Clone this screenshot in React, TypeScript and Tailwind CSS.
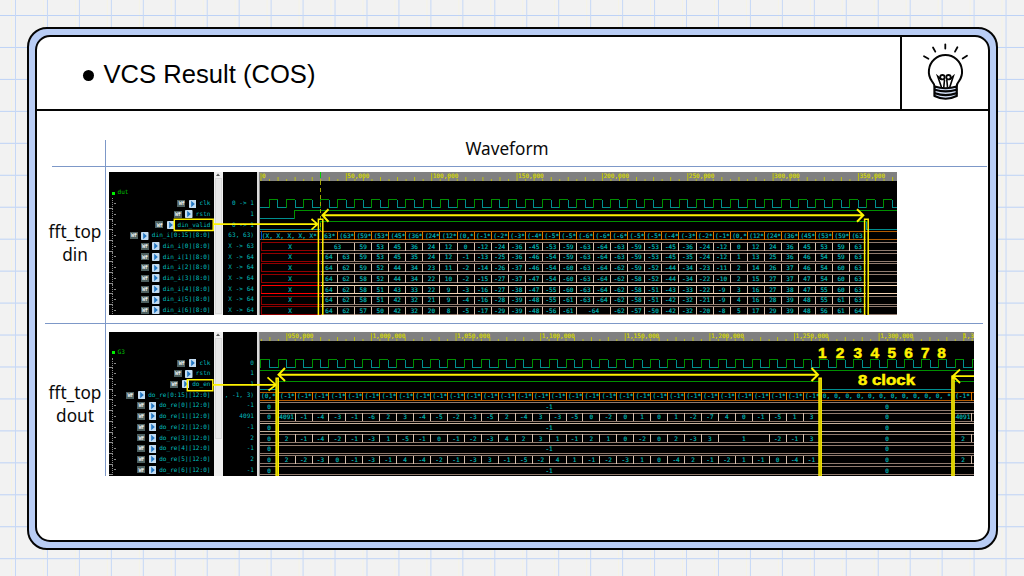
import React from 'react';

const MONO = '"DejaVu Sans Mono", monospace';
const ROW = 10.7;
const TEAL = '#00bcbc';
const GREEN = '#009000';
const CYAN = '#008f8f';

type Cell = [label: string, span: number];

const one = (s: string): Cell[] =>
  s.split(' ').map((t) => {
    const [label, span] = t.split('x');
    return [label, span ? Number(span) : 1];
  });

const ORANGE = '#b35a00';
const DIM = '#8f7a6e';
const BRIGHT = '#f3d3b4';

const dinData: Cell[][] = [
  one('63x2 59 53 45 36 24 12 0 -12 -24 -36 -45 -53 -59 -63 -64 -63 -59 -53 -45 -36 -24 -12 0 12 24 36 45 53 59 63'),
  one('64 63 59 53 45 35 24 12 -1 -13 -25 -36 -46 -54 -59 -63 -64 -63 -59 -53 -45 -35 -24 -12 1 13 25 36 46 54 59 63'),
  one('64 62 59 52 44 34 23 11 -2 -14 -26 -37 -46 -54 -60 -63 -64 -62 -59 -52 -44 -34 -23 -11 2 14 26 37 46 54 60 63'),
  one('64 62 58 52 44 34 22 10 -2 -15 -27 -37 -47 -54 -60 -63 -64 -62 -58 -52 -44 -34 -22 -10 2 15 27 37 47 54 60 63'),
  one('64 62 58 51 43 33 22 9 -3 -16 -27 -38 -47 -55 -60 -63 -64 -62 -58 -51 -43 -33 -22 -9 3 16 27 38 47 55 60 63'),
  one('64 62 58 51 42 32 21 9 -4 -16 -28 -39 -48 -55 -61 -63 -64 -62 -58 -51 -42 -32 -21 -9 4 16 28 39 48 55 61 63'),
  one('64 62 57 50 42 32 20 8 -5 -17 -29 -39 -48 -56 -61 -64x2 -62 -57 -50 -42 -32 -20 -8 5 17 29 39 48 56 61 64'),
];
const dinBus = one(
  '63* (63* (59* (53* (45* (36* (24* (12* (0,* (-1* (-2* (-3* (-4* (-5* (-5* (-6* (-6* (-6* (-5* (-5* (-4* (-3* (-2* (-1* (0,* (12* (24* (36* (45* (53* (59* (63,',
);
const doutData: Cell[][] = [
  one('-1x32'),
  one('4091 -1 -4 -3 -1 -6 2 3 -4 -5 -2 -3 -5 2 -4 3 -3 -5 0 -2 0 1 0 1 -2 -7 4 0 -1 -5 1 3'),
  one('-1x32'),
  one('2 -1 -4 -2 -1 -3 1 -5 -1 0 -1 -2 -3 4 2 3 1 -1 2 1 0 -2 0 2 -3 3 1x3 -2 -1 3'),
  one('-1x32'),
  one('2 -2 -3 0 -1 -3 -1 4 -4 -2 -1 -3 3 -1 -5 -2 4 1 -1 -2 -3 1 0 -4 2 -1 -2 1 -1 0 -4 -1'),
  one('-1x32'),
];
const doutBus: Cell[] = Array.from({ length: 32 }, () => ['(-1*', 1] as Cell);

function Txt({ x, y, children, fill = TEAL, anchor = 'middle' }: { x: number; y: number; children: string; fill?: string; anchor?: 'start' | 'middle' }) {
  return (
    <text x={x} y={y + 2.2} fontSize="6.1" fontFamily={MONO} fill={fill} stroke={fill} strokeWidth="0.15" textAnchor={anchor} xmlSpace="preserve">
      {children}
    </text>
  );
}

function Line({ d, color, w = 1 }: { d: string; color: string; w?: number }) {
  return <path d={d} stroke={color} strokeWidth={w} fill="none" shapeRendering="crispEdges" />;
}

function Ruler({ x0, x1, y, origin, step, first, unit }: { x0: number; x1: number; y: number; origin: number; step: number; first: number; unit: number }) {
  const items: React.ReactNode[] = [];
  for (let k = -10; k < 100; k++) {
    const x = origin + (k * step) / 10;
    if (x < x0 || x > x1) continue;
    const major = k % 10 === 0;
    items.push(<path key={k} d={`M${x} ${y + (major ? 1 : k % 2 ? 7 : 5)}V${y + 9}`} stroke="#c4c800" strokeWidth="0.9" />);
    if (major) {
      const n = first + (k / 10) * unit;
      const room = Math.max(1, Math.floor((x1 - x + 0.8) / 3.67));
      items.push(
        <Txt key={`t${k}`} x={room < 6 ? x - 0.7 : x + 1} y={y + 4.2} fill="#d8dc00" anchor="start">
          {(n === 0 ? '0' : n.toLocaleString('en-US')).slice(0, room < 9 ? room : 9)}
        </Txt>,
      );
    }
  }
  return (
    <g>
      <rect x={x0} y={y} width={x1 - x0} height="9" fill="#808080" />
      {items}
    </g>
  );
}

function Clock({ x0, x1, rise, period, y, startHigh }: { x0: number; x1: number; rise: number; period: number; y: number; startHigh: boolean }) {
  const g: string[] = [];
  const c: string[] = [];
  const hi = y - 4;
  const lo = y + 4;
  if (startHigh) {
    const f = rise - period / 2;
    g.push(`M${x0 + 0.5} ${lo}V${hi}H${f}`);
    c.push(`M${f} ${hi}V${lo}H${rise}`);
  } else c.push(`M${x0} ${lo}H${rise}`);
  for (let x = rise; x < x1; x += period) {
    g.push(`M${x} ${lo}V${hi}H${x + period / 2}`);
    c.push(`M${x + period / 2} ${hi}V${lo}H${x + period}`);
  }
  return (
    <g>
      <Line d={c.join('')} color={CYAN} />
      <Line d={g.join('')} color={GREEN} />
    </g>
  );
}

function BusRow({ y, cells, start, period, tick, shift = 0 }: { y: number; cells: Cell[]; start: number; period: number; tick: string; shift?: number }) {
  let k = 0;
  const out: React.ReactNode[] = [];
  cells.forEach(([label, span], i) => {
    const a = start + k * period;
    const b = a + span * period;
    k += span;
    out.push(<Line key={`l${i}`} d={`M${b} ${y - 4}V${y + 4}`} color={tick} />);
    out.push(
      <Txt key={i} x={(a + b) / 2 + shift} y={y}>
        {label}
      </Txt>,
    );
  });
  return <g>{out}</g>;
}

function Rails({ x0, x1, y, color }: { x0: number; x1: number; y: number; color: string }) {
  return <Line d={`M${x0} ${y - 4}H${x1}M${x0} ${y + 4}H${x1}`} color={color} />;
}

function DinWave() {
  const cy = 203.5;
  const P = 17.07;
  const S = 320.5;
  const E = S + 32 * P;
  return (
    <svg className="block h-[143px] w-[637px] shrink-0 bg-black" viewBox="260 172 637 143">
      <Ruler x0={260} x1={897} y={172} origin={261} step={85.35} first={0} unit={50000} />
      <Clock x0={260} x1={897} rise={269.4} period={P} y={cy} startHigh={false} />
      <Line d="M260 218.5H294.5" color={CYAN} />
      <Line d="M294.5 218.5V210.5H897" color={GREEN} />
      <Line d="M260 229.5H320.5M866.5 221.5V229.5H897" color={CYAN} />
      <Line d="M320.5 229.5V221.5H866.5" color={GREEN} />
      <path d="M320.5 172V178" stroke="#00d000" />
      <path d="M320.5 181V232" stroke="#a3a300" strokeDasharray="4 3" />
      <Rails x0={260} x1={897} y={235.5} color={ORANGE} />
      <Txt x={261.8} y={235.5} anchor="start">{'(X, X, X, X, X*'}</Txt>
      <Line d="M261 231V240" color="#004dc0" />
      <BusRow y={235.5} cells={dinBus} start={S} period={P} tick="#e07800" shift={0.8} />
      {dinData.map((cells, i) => {
        const y = 246.5 + i * ROW;
        const bright = i === 4;
        return (
          <g key={i}>
            <Rails x0={261} x1={S} y={y} color={bright ? '#ff0000' : '#920000'} />
            <Line d={`M261 ${y - 4}V${y + 4}`} color="#920000" />
            <Txt x={290} y={y}>X</Txt>
            <Rails x0={S} x1={897} y={y} color={bright ? BRIGHT : DIM} />
            <BusRow y={y} cells={cells} start={S} period={P} tick="#d6c0ae" />
          </g>
        );
      })}
      <path d={`M${E} 232V315`} stroke="#000" strokeWidth="2" />
    </svg>
  );
}

function DoutWave() {
  const P = 16.93;
  const S = 278.2;
  const zeroEnd = 954;
  return (
    <svg className="block h-[144px] w-[714px] shrink-0 bg-black" viewBox="260 331.5 714 144">
      <Ruler x0={260} x1={974} y={331.5} origin={286.8} step={84.62} first={950000} unit={50000} />
      <Clock x0={260} x1={974} rise={S} period={P} y={363.3} startHigh />
      <Line d="M260 369.8H974" color={GREEN} />
      <Line d="M260 388.5H278M820 380.5V388.5H953.5" color={CYAN} />
      <Line d="M278 388.5V380.5H820M953.5 388.5V380.5H974" color={GREEN} />
      <Rails x0={260} x1={974} y={395.5} color={ORANGE} />
      <Txt x={261} y={395.5} anchor="start">{'(0,*'}</Txt>
      <BusRow y={395.5} cells={doutBus} start={S} period={P} tick="#e07800" shift={0.8} />
      {Array.from({ length: 11 }, (_, i) => (
        <Txt key={i} x={826.5 + i * 11.3} y={395.5}>{'0,'}</Txt>
      ))}
      <Txt x={949} y={395.5}>*</Txt>
      <Txt x={962.5} y={395.5}>{'(-1*'}</Txt>
      <Line d="M971.5 391V400" color="#e07800" />
      {doutData.map((cells, i) => {
        const y = 405.8 + i * ROW;
        const odd = i % 2 === 1;
        return (
          <g key={i}>
            <Rails x0={260} x1={974} y={y} color={i === 2 ? '#c4ae9a' : DIM} />
            <Txt x={269} y={y}>0</Txt>
            <BusRow y={y} cells={cells} start={S} period={P} tick="#d6c0ae" />
            <Txt x={887} y={y}>0</Txt>
            {odd && <Txt x={963} y={y}>{i === 1 ? '4091' : '2'}</Txt>}
            {odd && <Line d={`M971.5 ${y - 4}V${y + 4}`} color="#d6c0ae" />}
            <path d={`M${zeroEnd} ${y - 4}V${y + 4}`} stroke={DIM} />
          </g>
        );
      })}
    </svg>
  );
}

function SignalName({ name }: { name: string }) {
  return (
    <div className="flex h-[10.7px] shrink-0 items-center pr-[3px]">
      <div className="h-px w-[3px] self-end bg-[#8a8a8a]" />
      <div className="h-full w-px border-l border-dotted border-[#8a8a8a]" />
      <div className="ml-px h-px w-[2px] bg-[#8a8a8a]" />
      <div className="ml-auto flex h-[7px] w-[8px] items-center justify-center bg-[#4d6060] text-[5.4px] font-bold tracking-[-0.5px] text-[#e8eeee]">Wf</div>
      <svg className="ml-[3.5px] h-[8px] w-[7.5px]" viewBox="0 0 7.5 8">
        <rect width="7.5" height="8" rx="0.8" fill="#c3dcf2" />
        <path d="M2.2 0.8L5.8 4L2.2 7.2Z" fill="#2377c4" />
      </svg>
      <span className="ml-[3px] whitespace-pre">{name}</span>
    </div>
  );
}

function Viewer({ scope, names, values, thumb, children }: { scope: string; names: string[]; values: string[]; thumb: string; children: React.ReactNode }) {
  return (
    <div className="flex h-full overflow-hidden font-['DejaVu_Sans_Mono',monospace] text-[6.1px] leading-[10.7px] text-[#00bcbc]">
      <div className="flex w-[104.5px] shrink-0 flex-col overflow-hidden bg-black">
        <div className="flex h-[26.2px] shrink-0 items-end pl-[2.5px] text-[#00c000]">
          <span className="mb-[3.6px] h-[3px] w-[3px] bg-[#00f000]" />
          <span className="ml-[3px]">{scope}</span>
        </div>
        {names.map((n) => (
          <SignalName key={n} name={n} />
        ))}
      </div>
      <div className="flex w-[9.5px] shrink-0 flex-col items-center bg-[#f0f0f0]">
        <svg className="h-[6px] w-[6px] shrink-0" viewBox="0 0 6 6">
          <path d="M1 4L3 1.5L5 4Z" fill="#555" />
        </svg>
        <div className={`w-[7px] border border-[#d8d8d8] bg-[#e8e8e8] ${thumb}`} />
      </div>
      <div className="flex w-[33.5px] shrink-0 flex-col items-end overflow-hidden bg-black pt-[26.2px] pr-[2.5px]">
        {values.map((v, i) => (
          <div key={i} className="h-[10.7px] shrink-0 whitespace-pre">
            {v}
          </div>
        ))}
      </div>
      <div className="w-[3.5px] shrink-0 border-r border-[#8a8a8a] bg-[#dcdcdc]" />
      {children}
    </div>
  );
}

const YEL = '#fff200';

function Marks({ d, w = 1.7 }: { d: string; w?: number }) {
  return <path d={d} stroke={YEL} strokeWidth={w} fill="none" />;
}

function DinMarks() {
  return (
    <svg className="absolute inset-0 h-full w-full" viewBox="109 172 788 143">
      <Marks d="M174.3 219.2H213.2V230.4H174.3Z" w={1.5} />
      <Marks d="M213 224.2H317M311.5 219L317.5 224.2L311.5 229.6" />
      <Marks d="M318.4 316V219.2H322.8V316M864.6 316V219.2H868.2V316" w={1.5} />
      <Marks d="M322 215.3H863.5M328.5 209.3L322.5 215.3L328.5 221.7M857 209.3L863.3 215.3L857 221.7" w={2} />
    </svg>
  );
}

function DoutMarks() {
  const digits = [822.3, 840, 857.7, 874.8, 891.7, 908.5, 925.4, 941.5];
  return (
    <svg className="absolute inset-0 h-full w-full" viewBox="109 331.5 865 144">
      <Marks d="M187.3 379.3H212.8V390.3H187.3Z" w={1.5} />
      <Marks d="M213 384.4H275.5M267.5 376.8L276 384.4L268.5 390" />
      <path d="M277.2 377V476M820.1 377V476M953 375V476" stroke={YEL} strokeWidth="3.6" />
      <path d="M277.2 378.5V476M820.1 378.5V476M953 378.5V476" stroke="#8a8200" strokeWidth="0.6" />
      <Marks d="M278.5 374.2H818M285 367.5L278.5 374.2L285 380.5M811.5 367.5L818 374.2L811.5 380.5" w={2} />
      <Marks d="M974 375.6H953M960 369L953 375.6L960 382.5" w={1.8} />
      <g fontFamily='"Liberation Sans", sans-serif' fontWeight="700" fill={YEL} stroke={YEL} strokeWidth="0.5">
        {digits.map((x, i) => (
          <text key={x} x={x - 4.3} y={357.1} fontSize="14.8" textLength="8.6" lengthAdjust="spacingAndGlyphs">
            {i + 1}
          </text>
        ))}
        <text x="858" y="384.2" fontSize="14.2" textLength="57" lengthAdjust="spacingAndGlyphs">8 clock</text>
      </g>
    </svg>
  );
}

function Bulb() {
  return (
    <svg className="h-[60px] w-[50px]" viewBox="920 42 50 60" fill="none" stroke="#050505" strokeWidth="2" strokeLinecap="round">
      <path d="M945.3 44.3V48.6M933 47.5L935.3 51.6M957.4 47.3L955 51.6M924 56.2L928.4 58.8M967 55.8L962.7 58.5" strokeWidth="1.8" />
      <path d="M934.6 96V87.2C934.6 84.5 933.4 83 931.9 81.2A16.6 16.6 0 1 1 959 81.2C957.4 83 956.6 84.5 956.6 87.2V96" />
      <path d="M934.6 86.5Q945.6 90 956.6 86.5V96Q945.6 101.5 934.6 96Z" fill="#d3dff5" />
      <path d="M935 89.7Q945.6 93.2 956.4 89.7M935 93.3Q945.6 97 956.4 93.3" strokeWidth="2.2" />
      <path d="M941.3 86.8L937.7 76.3L941 79.2M949.9 86.8L953.3 76.3L950 79.2M943.8 86.8L944.5 80M947.5 86.8L946.8 80" strokeWidth="1.6" />
      <circle cx="942.4" cy="77.2" r="2.2" strokeWidth="1.8" />
      <circle cx="948.5" cy="77.2" r="2.2" strokeWidth="1.8" />
    </svg>
  );
}

const dinNames = ['clk', 'rstn', 'din_valid', 'din_i[0:15][8:0]', ...[0, 1, 2, 3, 4, 5, 6].map((i) => `din_i[${i}][8:0]`)];
const dinValues = ['0 -> 1', '1', '0 -> 1', '63, 63)', 'X -> 63', 'X -> 64', 'X -> 64', 'X -> 64', 'X -> 64', 'X -> 64', 'X -> 64'];
const doutNames = ['clk', 'rstn', 'do_en', 'do_re[0:15][12:0]', ...[0, 1, 2, 3, 4, 5, 6].map((i) => `do_re[${i}][12:0]`)];
const doutValues = ['0', '1', '1', ', -1, 3)', '-1', '4091', '-1', '2', '-1', '2', '-1'];

export default function App() {
  return (
    <div className="h-[576px] w-[1024px] overflow-hidden bg-[#f2f2f2] bg-[linear-gradient(to_right,#c6d8f6_1px,transparent_1px),linear-gradient(to_bottom,#bdd2f6_1px,transparent_1px),linear-gradient(to_right,#f5f3e6_1px,transparent_1px)] bg-[size:31.96px_32px,32px_31.96px,31.96px_32px] bg-[position:15px_0,0_15px,11px_0] pt-[27px] pl-[27px]">
      <div className="h-[522.5px] w-[970.5px] rounded-[20px] border-2 border-[#050505] bg-[#b9cdf5] p-[6px]">
        <div className="flex h-full flex-col overflow-hidden rounded-[15px] border-2 border-[#050505] bg-white">
          <header className="flex h-[74px] shrink-0 border-b-2 border-[#050505]">
            <div className="flex grow items-center pt-[2px] pl-[45.5px] font-['Liberation_Sans',sans-serif] text-[25.6px] text-black">
              <span className="mt-[3px] h-[11px] w-[11px] rounded-full bg-black" />
              <h1 className="ml-[10px] whitespace-pre">VCS Result (COS)</h1>
            </div>
            <div className="flex w-[88px] justify-center border-l-2 border-[#050505] pt-[5px]">
              <Bulb />
            </div>
          </header>
          <main className="flex grow flex-col pt-[29px] font-['Noto_Sans',sans-serif] text-[17.2px] leading-[23px] text-[#0a0a0a]">
            <div className="ml-[15px] flex h-[27px] w-[935px] shrink-0 border-b border-[#7d98c8]">
              <div className="w-[54px] shrink-0 border-r border-[#7d98c8]" />
              <div className="w-[802px] text-center leading-[17px]">Waveform</div>
            </div>
            <div className="ml-[8px] flex h-[157px] w-[938px] shrink-0 border-b border-[#7d98c8]">
              <div className="flex w-[61px] shrink-0 flex-col items-center border-r border-[#7d98c8] pt-[53px]">
                <span>fft_top</span>
                <span>din</span>
              </div>
              <div className="pt-[5px] pl-[3px]">
                <div className="relative h-[143px] w-[788px]">
                  <Viewer scope="dut" names={dinNames} values={dinValues} thumb="h-[136px]">
                    <DinWave />
                  </Viewer>
                  <DinMarks />
                </div>
              </div>
            </div>
            <div className="ml-[8px] flex h-[152px] w-[938px] shrink-0">
              <div className="flex w-[61px] shrink-0 flex-col items-center border-r border-[#7d98c8] pt-[57px]">
                <span>fft_top</span>
                <span>dout</span>
              </div>
              <div className="pt-[7.5px] pl-[3px]">
                <div className="relative h-[144px] w-[865px]">
                  <Viewer scope="G3" names={doutNames} values={doutValues} thumb="h-[101px]">
                    <DoutWave />
                  </Viewer>
                  <DoutMarks />
                </div>
              </div>
            </div>
          </main>
        </div>
      </div>
    </div>
  );
}
